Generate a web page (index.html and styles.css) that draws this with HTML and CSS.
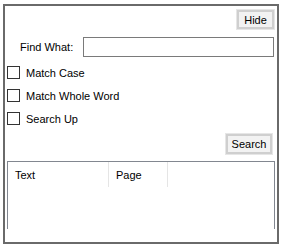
FILE: index.html
```html
<!DOCTYPE html>
<html lang="en">
<head>
  <meta charset="UTF-8" />
  <title>Find</title>
  <link rel="stylesheet" href="styles.css">
</head>
<body>
  <div class="panel">
    <div class="top-row">
      <button class="btn hide-btn" type="button">Hide</button>
    </div>

    <div class="find-row">
      <label class="find-label">Find What:</label>
      <input class="find-input" type="text" />
    </div>

    <div class="options">
      <label class="option"><span class="box"></span>Match Case</label>
      <label class="option"><span class="box"></span>Match Whole Word</label>
      <label class="option"><span class="box"></span>Search Up</label>
    </div>

    <div class="search-row">
      <button class="btn search-btn" type="button">Search</button>
    </div>

    <div class="results">
      <div class="results-head">
        <div class="col col-text">Text</div>
        <div class="col col-page">Page</div>
      </div>
    </div>
  </div>
</body>
</html>
```

FILE: styles.css
```css
body {
  margin: 0;
  background-color: #fff;
  font-family: 'Liberation Sans', Arial, sans-serif;
  font-size: 11px;
  color: #000;
}
.panel {
  box-sizing: border-box;
  width: 276px;
  height: 240px;
  margin: 4px 0 0 3px;
  border: 2px solid #6a6a6a;
  display: flex;
  flex-direction: column;
}
.top-row {
  display: flex;
  justify-content: flex-end;
  padding: 4px 3px 0 0;
}
.btn {
  box-sizing: border-box;
  height: 19px;
  padding: 0;
  font-family: inherit;
  font-size: 11px;
  color: #000;
  background-color: #f2f2f2;
  border: 2px solid #cfcfcf;
  outline: 1px solid #e6e6e6;
}
.hide-btn {
  width: 37px;
}
.find-row {
  display: flex;
  align-items: center;
  margin-top: 8px;
  padding-right: 3px;
}
.find-label {
  width: 78px;
  padding-left: 15px;
  box-sizing: border-box;
}
.find-input {
  box-sizing: border-box;
  flex: 1;
  height: 20px;
  margin: 0;
  border: 1px solid #7a7a7a;
  outline: none;
}
.options {
  display: flex;
  flex-direction: column;
  margin-top: 4px;
  padding-left: 2px;
}
.option {
  display: flex;
  align-items: center;
  height: 23px;
}
.box {
  box-sizing: border-box;
  width: 13px;
  height: 13px;
  border: 1px solid #333;
  margin-right: 6px;
}
.search-row {
  display: flex;
  justify-content: flex-end;
  padding-right: 5px;
  margin-top: 4px;
}
.search-btn {
  width: 46px;
  height: 20px;
}
.results {
  box-sizing: border-box;
  height: 68px;
  margin: 7px 2px 0 2px;
  border: 1px solid #828790;
  border-bottom: none;
}
.results-head {
  display: flex;
  height: 25px;
}
.col {
  box-sizing: border-box;
  padding: 7px 0 0 7px;
  border-right: 1px solid #e5e5e5;
}
.col-text {
  width: 101px;
}
.col-page {
  width: 59px;
}
```
